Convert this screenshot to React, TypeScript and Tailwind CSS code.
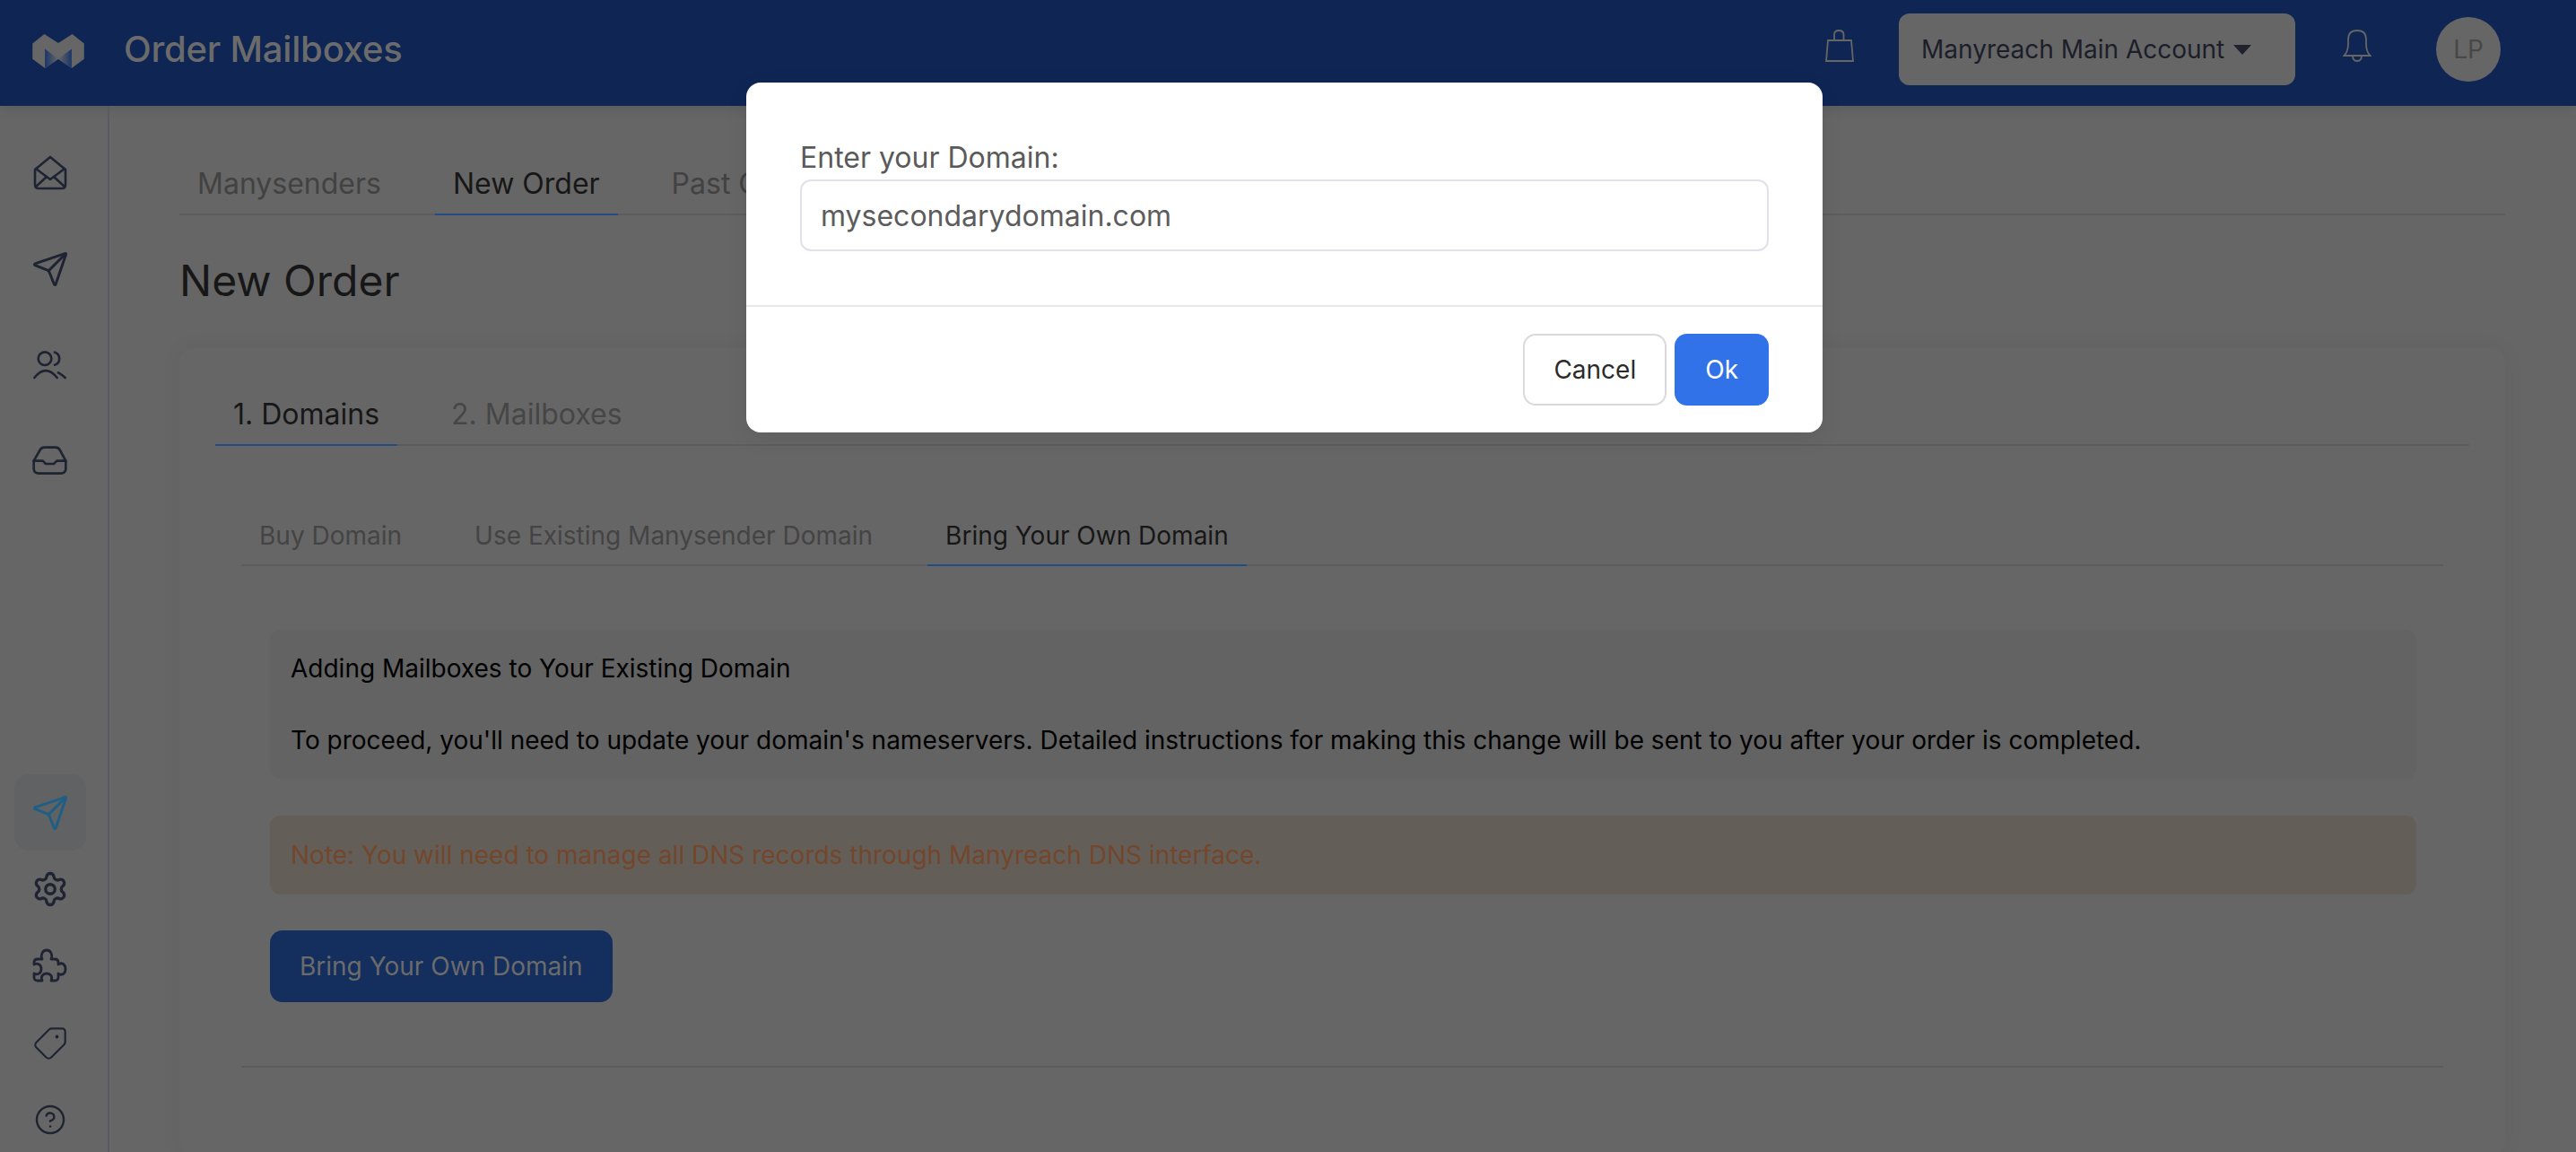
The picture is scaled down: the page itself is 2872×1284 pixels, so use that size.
import { CircleHelp, Send, Settings, Tag } from 'lucide-react'

function LogoMark() {
    return (
        <svg width="58" height="38" viewBox="0 0 174 115">
            <defs>
                <linearGradient id="foldLeft" x1="0" x2="1" y1="0" y2="0">
                    <stop offset="0" stopColor="#1b3568" />
                    <stop offset="1" stopColor="#666666" />
                </linearGradient>
                <linearGradient id="foldRight" x1="1" x2="0" y1="0" y2="0">
                    <stop offset="0" stopColor="#1b3568" />
                    <stop offset="1" stopColor="#666666" />
                </linearGradient>
            </defs>
            <polygon
                points="40,0 87,30 134,0 174,32 174,84 132,115 87,84 42,115 0,84 0,32"
                fill="#666666"
            />
            <polygon points="42,50 87,84 42,115" fill="url(#foldLeft)" />
            <polygon points="132,50 87,84 132,115" fill="url(#foldRight)" />
        </svg>
    )
}

function BagIcon() {
    return (
        <svg width="32" height="36" viewBox="0 0 32 36" fill="none" stroke="#666666" strokeWidth="1.8">
            <path d="M3 12 H29 L31 35 H1 Z" />
            <path d="M10 12 V5.5 Q10 1 15 1 Q20.5 1 20.5 5.5 V12" />
        </svg>
    )
}

function BellIcon() {
    return (
        <svg width="32" height="36" viewBox="0 0 32 36" fill="none" stroke="#666666" strokeWidth="1.8">
            <path d="M1.5 29 Q5.5 25 6 17 V11 Q6 1 16 1 Q26 1 26 11 V17 Q26.5 25 30.5 29 Z" />
            <path d="M11 29 Q11 35 16 35 Q21 35 21 29" />
        </svg>
    )
}

function MailOpenIcon() {
    return (
        <svg width="40" height="40" viewBox="0 0 40 40" fill="none" stroke="#1e2432" strokeWidth="2.6" strokeLinejoin="round" strokeLinecap="round">
            <path d="M3 16 L20 2 L37 16 V33 Q37 37 33 37 H7 Q3 37 3 33 Z" />
            <path d="M4 15 L20 27 L36 15" />
            <path d="M16 24 L4 35" />
            <path d="M24 24 L36 35" />
        </svg>
    )
}

function UsersIcon() {
    return (
        <svg width="40" height="40" viewBox="50 77 120 120" fill="none" stroke="#1e2432" strokeWidth="8" strokeLinecap="round">
            <circle cx="92" cy="118" r="22" />
            <path d="M57 182 Q95 135 133 182" />
            <path d="M125 97 A22 22 0 0 1 125 139" />
            <path d="M137 165 Q150 172 160 182" />
        </svg>
    )
}

function InboxIcon() {
    return (
        <svg width="40" height="40" viewBox="50 398 120 120" fill="none" stroke="#1e2432" strokeWidth="8" strokeLinejoin="round" strokeLinecap="round">
            <path d="M55 460 L75 425 Q80 415 90 415 H128 Q138 415 143 425 L162 460 V485 Q162 502 145 502 H72 Q55 502 55 485 Z" />
            <path d="M55 460 H85 L95 470 H122 L132 460 H162" />
        </svg>
    )
}

function PuzzleIcon() {
    return (
        <svg width="40" height="40" viewBox="2 0 40 40" fill="none" stroke="#1e2432" strokeWidth="2.8" strokeLinejoin="round">
            <path d="M8 12 H13 C11 8 13 2 18 2 C23 2 25 8 23 12 H27 Q31 12 31 16 V18 C35 15 39 18 39 23 C39 28 35 31 31 28 V32 Q31 36 27 36 H23 C25 31 22 28 18 28 C14 28 11 31 13 36 H8 Q4 36 4 32 V28 C8 30 12 28 12 23 C12 18 8 16 4 18 V16 Q4 12 8 12 Z" />
        </svg>
    )
}

function UnderlineTab({
    label,
    active,
    className,
    idleColor,
}: {
    label: string
    active?: boolean
    className: string
    idleColor: string
}) {
    return (
        <div
            className={`-mb-[2px] border-b-2 ${className} ${
                active ? 'border-[#224c84] text-[#171717]' : `border-transparent ${idleColor}`
            }`}
        >
            {label}
        </div>
    )
}

export default function App() {
    return (
        <div className="relative h-screen overflow-hidden bg-[#666666] [font-family:Inter,sans-serif]">
            <header className="flex h-[118px] items-center bg-[#0f2654] pb-[8px] pl-[36px] pr-[84px] shadow-[0_2px_14px_rgba(0,0,0,0.12)]">
                <div className="mt-[3px]">
                    <LogoMark />
                </div>
                <span className="ml-[44px] text-[40px] font-medium leading-none tracking-[-0.2px] text-[#6b6b6b]">
                    Order Mailboxes
                </span>
                <div className="mb-[8px] ml-auto">
                    <BagIcon />
                </div>
                <button className="ml-[50px] flex h-[80px] w-[442px] items-center gap-[10px] rounded-[12px] bg-[#666666] pl-[25px] text-[28px] text-[#1c1e2a]">
                    Manyreach Main Account
                    <span className="h-0 w-0 border-x-[10px] border-t-[11px] border-x-transparent border-t-[#20222e]" />
                </button>
                <div className="mb-[8px] ml-[53px]">
                    <BellIcon />
                </div>
                <div className="ml-[72px] flex h-[72px] w-[72px] items-center justify-center rounded-full bg-[#666666] text-[28px] text-[#484848]">
                    LP
                </div>
            </header>

            <div className="flex h-[1166px]">
                <aside className="flex w-[122px] shrink-0 flex-col justify-between border-r-2 border-[#5a5a62] pt-[21px]">
                    <div className="flex flex-col items-center pr-[9px]">
                        <div className="flex h-[107px] items-center"><MailOpenIcon /></div>
                        <div className="flex h-[107px] items-center">
                            <Send size={42} strokeWidth={1.7} color="#1e2432" />
                        </div>
                        <div className="flex h-[106px] items-center"><UsersIcon /></div>
                        <div className="flex h-[107px] items-center"><InboxIcon /></div>
                    </div>
                    <div className="-mb-[6px] flex flex-col items-center pr-[9px]">
                        <div className="flex h-[85px] w-[80px] items-center justify-center rounded-[16px] bg-[#616264]">
                            <Send size={42} strokeWidth={1.7} color="#1f5f86" />
                        </div>
                        <div className="flex h-[86px] items-center">
                            <Settings size={42} strokeWidth={1.9} color="#1e2432" />
                        </div>
                        <div className="flex h-[86px] items-center">
                            <PuzzleIcon />
                        </div>
                        <div className="flex h-[85px] items-center">
                            <Tag size={40} strokeWidth={1.3} color="#1e2432" className="rotate-90" />
                        </div>
                        <div className="flex h-[85px] items-center">
                            <CircleHelp size={36} strokeWidth={1.6} color="#1e2432" />
                        </div>
                    </div>
                </aside>

                <main className="w-[2671px] pl-[78px]">
                    <div className="mt-[63px] flex gap-[40px] border-b-2 border-[#5c5c5c] text-[32px] leading-[48px]">
                        <UnderlineTab label="Manysenders" className="px-5 pb-[9px]" idleColor="text-[#424242]" />
                        <UnderlineTab label="New Order" active className="px-5 pb-[9px]" idleColor="" />
                        <UnderlineTab label="Past Orders" className="px-5 pb-[9px]" idleColor="text-[#424242]" />
                    </div>

                    <h1 className="mt-[42px] text-[48px] font-normal leading-[62px] text-[#171717]">New Order</h1>

                    <section className="mt-[44px] h-[900px] rounded-[16px] px-[40px] pt-[50px] shadow-[0_0_24px_rgba(0,0,0,0.05)]">
                        <div className="flex gap-[40px] border-b-2 border-[#5c5c5c] text-[32px] leading-[48px]">
                            <UnderlineTab label="1. Domains" active className="px-5 pb-[9px]" idleColor="" />
                            <UnderlineTab label="2. Mailboxes" className="px-5 pb-[9px]" idleColor="text-[#464646]" />
                        </div>

                        <div className="mx-[29px] mt-[80px]">
                            <div className="flex gap-[41px] border-b-2 border-[#5c5c5c] text-[28px] leading-[40px]">
                                <UnderlineTab label="Buy Domain" className="px-5 pb-[12px]" idleColor="text-[#444444]" />
                                <UnderlineTab label="Use Existing Manysender Domain" className="px-5 pb-[12px]" idleColor="text-[#444444]" />
                                <UnderlineTab label="Bring Your Own Domain" active className="px-5 pb-[12px]" idleColor="" />
                            </div>

                            <div className="ml-[32px] mr-[30px] mt-[71px] text-[28px] leading-[40px]">
                                <div className="rounded-[12px] bg-[#636363] px-[23px] py-[23px] text-black">
                                    Adding Mailboxes to Your Existing Domain
                                    <br />
                                    <br />
                                    To proceed, you'll need to update your domain's nameservers. Detailed instructions for making this change will be sent to you after your order is completed.
                                </div>
                                <div className="mt-[41px] rounded-[12px] bg-[#635f58] px-[23px] py-[24px] text-[#74462c]">
                                    Note: You will need to manage all DNS records through Manyreach DNS interface.
                                </div>
                                <button className="mt-[40px] rounded-[14px] bg-[#142e5e] px-[33px] py-[20px] text-[#6b6b6b]">
                                    Bring Your Own Domain
                                </button>
                            </div>

                            <div className="mt-[71px] border-t-2 border-[#5c5c5c]" />
                        </div>
                    </section>
                </main>
            </div>

            <div className="absolute inset-0 flex items-start justify-center pr-2 pt-[92px]">
                <div className="w-[1200px] rounded-[16px] bg-white shadow-[0_6px_24px_rgba(0,0,0,0.08)]">
                    <div className="px-[60px] pb-[60px] pt-[60px]">
                        <label className="block text-[32px] leading-[48px] text-[#5a5a5a]">Enter your Domain:</label>
                        <input
                            readOnly
                            value="mysecondarydomain.com"
                            className="block h-[80px] w-full rounded-[12px] border-2 border-[#dfe1ec] px-[21px] text-[32px] text-[#5c5c5c] outline-none"
                        />
                    </div>
                    <div className="flex justify-end gap-[9px] border-t-2 border-[#e5e7eb] px-[60px] pb-[30px] pt-[30px] text-[28px]">
                        <button className="h-[80px] rounded-[14px] border-2 border-[#d9dadc] px-[32px] text-[#2b2b2b]">Cancel</button>
                        <button className="h-[80px] rounded-[14px] bg-[#3172e8] px-[34px] text-white">Ok</button>
                    </div>
                </div>
            </div>
        </div>
    )
}
